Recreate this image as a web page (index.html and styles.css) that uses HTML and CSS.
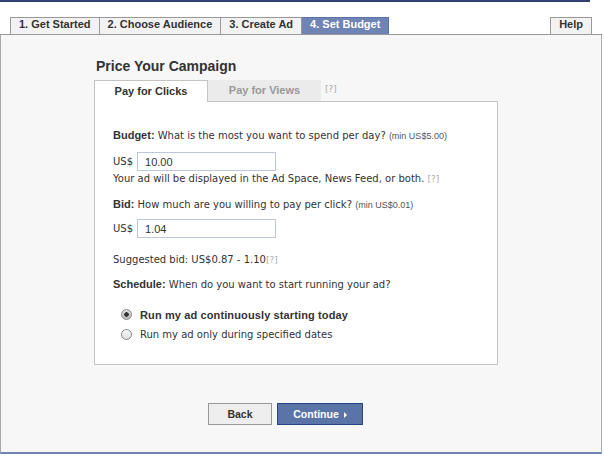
FILE: index.html
```html
<!DOCTYPE html>
<html>
<head>
<meta charset="utf-8">
<link rel="stylesheet" href="styles.css">
</head>
<body>
<div class="page">
  <div class="topbar"></div>
  <div class="steps">
    <div class="step">1. Get Started</div>
    <div class="step">2. Choose Audience</div>
    <div class="step">3. Create Ad</div>
    <div class="step active">4. Set Budget</div>
    <div class="step help">Help</div>
  </div>
  <div class="main">
    <div class="campaign">
      <h2 class="title">Price Your Campaign</h2>
      <div class="ptabs">
        <div class="ptab on">Pay for Clicks</div>
        <div class="ptab off">Pay for Views</div>
        <span class="hint tabhint">[?]</span>
      </div>
      <div class="panel">
        <p class="line first"><b>Budget:</b> What is the most you want to spend per day? <small>(min US$5.00)</small></p>
        <div class="amount gap-a"><span>US$</span><input class="field" type="text" value="10.00"></div>
        <p class="line gap-b">Your ad will be displayed in the Ad Space, News Feed, or both. <span class="hint">[?]</span></p>
        <p class="line gap-c"><b>Bid:</b> How much are you willing to pay per click? <small>(min US$0.01)</small></p>
        <div class="amount gap-d"><span>US$</span><input class="field" type="text" value="1.04"></div>
        <p class="line gap-e">Suggested bid: US$0.87 - 1.10<span class="hint">[?]</span></p>
        <p class="line gap-f"><b>Schedule:</b> When do you want to start running your ad?</p>
        <label class="option gap-g"><input type="radio" name="sched" class="radio" checked><b>Run my ad continuously starting today</b></label>
        <label class="option gap-h"><input type="radio" name="sched" class="radio">Run my ad only during specified dates</label>
      </div>
    </div>
    <div class="actions">
      <button class="btn back">Back</button>
      <button class="btn continue">Continue <span class="arrow"></span></button>
    </div>
  </div>
</div>
</body>
</html>
```

FILE: styles.css
```css
* { box-sizing: border-box; }
html, body { margin: 0; padding: 0; background: #fff; }
body { font-family: "DejaVu Sans", "Liberation Sans", sans-serif; font-size: 10px; color: #333; }
b { font-family: "Liberation Sans", Arial, sans-serif; font-size: 11px; font-weight: bold; }

.page { width: 602px; }

.topbar { width: 590px; height: 2px; background: #2e4170; }

.steps {
  display: flex;
  align-items: flex-end;
  height: 33px;
  padding: 0 10px 0 10px;
  border-bottom: 1px solid #999;
}
.step {
  height: 17px;
  line-height: 16px;
  padding: 0 8px;
  border: 1px solid #999;
  border-bottom: none;
  border-left: none;
  background: #f2f2f2;
  font: bold 11px "Liberation Sans", Arial, sans-serif;
  color: #333;
  white-space: nowrap;
}
.step:first-child { border-left: 1px solid #999; }
.step.active { background: #6d84b4; border-color: #5b74a8; color: #fff; }
.step.help { margin-left: auto; border-left: 1px solid #999; }

.main {
  height: 419px;
  background: #f7f7f7;
  border-left: 1px solid #aaa;
  border-right: 1px solid #aaa;
  border-bottom: 2px solid #6d84b4;
}

.campaign { padding: 23px 0 0 93px; width: 497px; }
.title { margin: 0 0 5px 2px; font: bold 14px/17px "Liberation Sans", Arial, sans-serif; color: #333; }

.ptabs { display: flex; align-items: flex-start; height: 21px; }
.ptab {
  height: 21px;
  text-align: center;
  font: bold 11px/20px "Liberation Sans", Arial, sans-serif;
}
.ptab.on {
  position: relative;
  z-index: 1;
  width: 114px;
  height: 22px;
  background: #fff;
  border: 1px solid #c4c4c4;
  border-bottom: none;
  color: #333;
}
.ptab.off { width: 113px; background: #ebebeb; color: #999; }
.tabhint { margin: 4px 0 0 4px; }

.hint { color: #aaa; font-size: 9px; }

.panel {
  width: 404px;
  height: 264px;
  background: #fff;
  border: 1px solid #c4c4c4;
  padding: 27px 18px 0 18px;
}
.line { margin: 0; line-height: 12px; white-space: nowrap; }
.line small { font: 9px "Liberation Sans", Arial, sans-serif; color: #555; }

.amount { display: flex; align-items: center; gap: 4px; height: 19px; }
.field {
  width: 139px;
  height: 19px;
  border: 1px solid #bdc7d8;
  padding: 0 7px;
  font: 11px "Liberation Sans", Arial, sans-serif;
  color: #333;
  margin: 0;
}

.gap-a { margin-top: 10px; }
.gap-b { margin-top: 2px; }
.gap-c { margin-top: 13px; }
.gap-d { margin-top: 8px; }
.gap-e { margin-top: 16px; }
.gap-f { margin-top: 12px; }
.gap-g { margin-top: 17px; }
.gap-h { margin-top: 7px; }

.option { display: flex; align-items: center; height: 13px; padding-left: 8px; gap: 8px; font-size: 10px; }
.option b { letter-spacing: 0.12px; }
.radio {
  -webkit-appearance: none;
  appearance: none;
  margin: 0;
  width: 11px;
  height: 11px;
  border-radius: 50%;
  border: 1px solid #888;
  background: linear-gradient(#fafafa, #ddd);
}
.radio:checked {
  background: radial-gradient(circle, #333 0 2px, transparent 2.5px), linear-gradient(#ddd, #bbb);
}

.actions { display: flex; gap: 5px; padding-left: 207px; margin-top: 38px; }
.btn {
  height: 22px;
  font: bold 10.5px "Liberation Sans", Arial, sans-serif;
  margin: 0;
  padding: 0;
}
.back { width: 64px; background: #eee; border: 1px solid #999; color: #333; }
.continue { width: 86px; background: #5b74a8; border: 1px solid #29447e; color: #fff; }
.arrow {
  display: inline-block;
  width: 0; height: 0;
  border-left: 3px solid #fff;
  border-top: 3px solid transparent;
  border-bottom: 3px solid transparent;
  margin-left: 2px;
}
```
